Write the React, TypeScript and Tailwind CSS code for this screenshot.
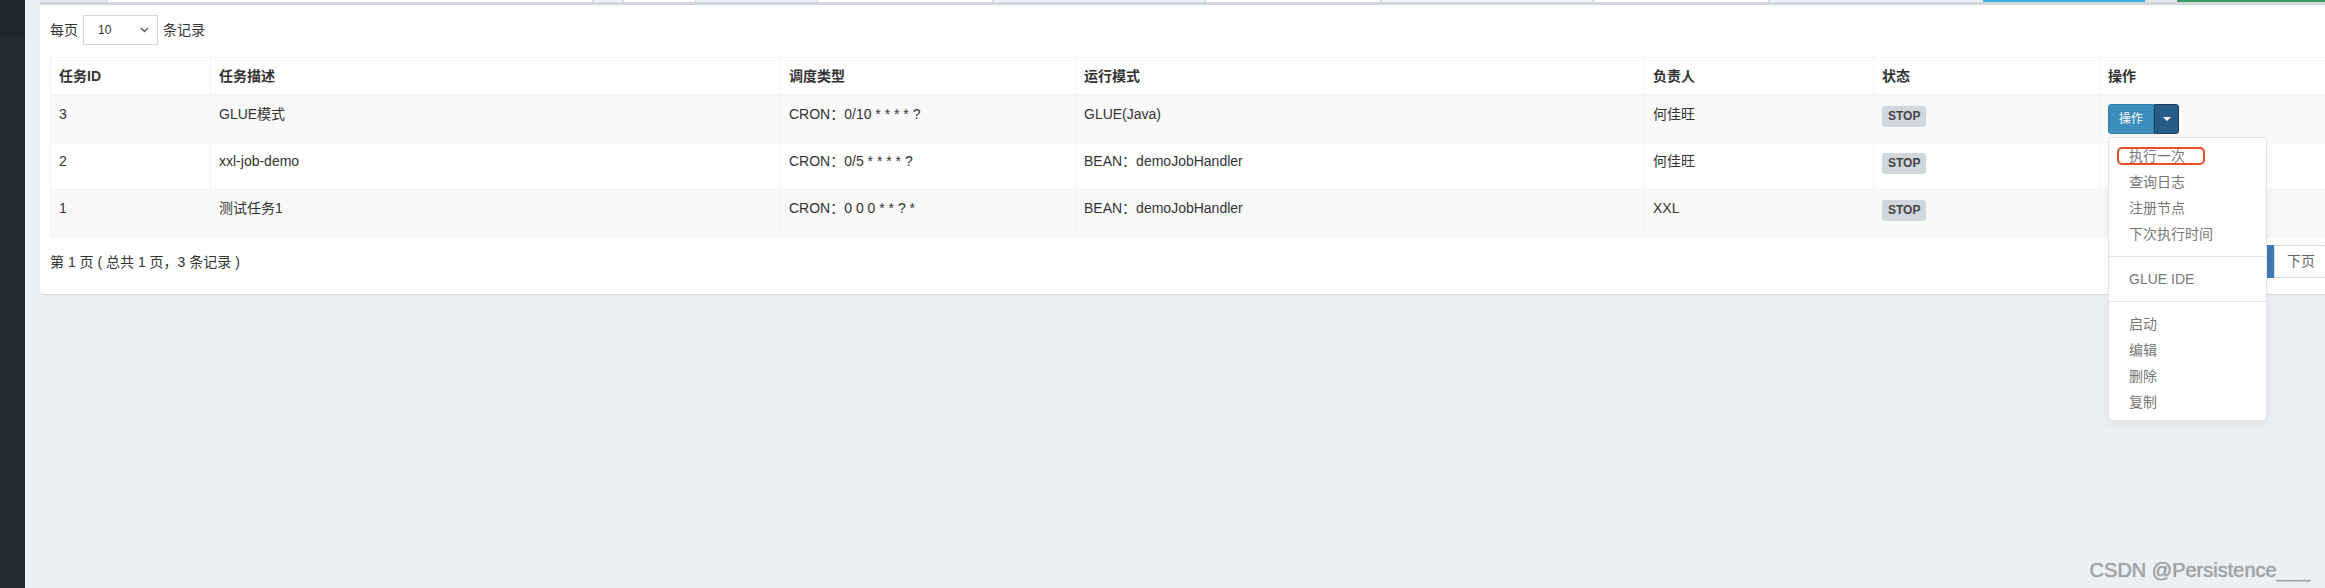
import React from 'react';

const rows = [
    { id: '3', desc: 'GLUE模式', cron: 'CRON：0/10 * * * * ?', mode: 'GLUE(Java)', owner: '何佳旺' },
    { id: '2', desc: 'xxl-job-demo', cron: 'CRON：0/5 * * * * ?', mode: 'BEAN：demoJobHandler', owner: '何佳旺' },
    { id: '1', desc: '测试任务1', cron: 'CRON：0 0 0 * * ? *', mode: 'BEAN：demoJobHandler', owner: 'XXL' },
];

// bottoms of the filter row above the box (inputs, gaps, buttons)
const strip = [
    { w: 67, c: 'bg-[#e4e8ed]' },
    { w: 486, c: 'bg-white border-x border-[#d2d6de]' },
    { w: 30, c: 'bg-[#ecf0f5]' },
    { w: 73, c: 'bg-white border-x border-[#d2d6de]' },
    { w: 121, c: 'bg-[#ecf0f5]' },
    { w: 176, c: 'bg-white border-x border-[#d2d6de]' },
    { w: 212, c: 'bg-[#ecf0f5]' },
    { w: 176, c: 'bg-white border-x border-[#d2d6de]' },
    { w: 212, c: 'bg-[#f3f5f8] border-x border-[#d2d6de]' },
    { w: 176, c: 'bg-white border-x border-[#d2d6de]' },
    { w: 214, c: 'bg-[#ecf0f5]' },
    { w: 162, c: 'bg-[#3badde]' },
    { w: 32, c: 'bg-[#e4e8ed]' },
    { w: 160, c: 'bg-[#3c9c5f]' },
];

function ActionButton() {
    return (
        <div className="relative inline-flex">
            <button className="h-[30px] px-[10px] text-[12px] leading-[18px] text-white bg-[#3c8dbc] border border-[#367fa9] rounded-l-[3px]">
                操作
            </button>
            <button className="h-[30px] w-[25px] flex items-center justify-center bg-[#285b85] border border-[#1c3f5e] rounded-r-[3px]">
                <span className="block w-0 h-0 border-t-[4px] border-t-white border-x-[4px] border-x-transparent" />
            </button>
            <DropdownMenu />
        </div>
    );
}

function DropdownMenu() {
    const item = 'block px-[20px] h-[26px] leading-[26px] text-[14px] text-[#777] whitespace-nowrap';
    return (
        <div className="absolute left-0 top-full mt-[3px] z-20 w-[159px] bg-white border border-[#e3e3e3] rounded-[4px] py-[5px] shadow-[0_4px_10px_rgba(0,0,0,0.06)]">
            <div className={item}>执行一次</div>
            <div className={item}>查询日志</div>
            <div className={item}>注册节点</div>
            <div className={item}>下次执行时间</div>
            <div className="my-[9px] h-px bg-[#e5e5e5]" />
            <div className={item}>GLUE IDE</div>
            <div className="my-[9px] h-px bg-[#e5e5e5]" />
            <div className={item}>启动</div>
            <div className={item}>编辑</div>
            <div className={item}>删除</div>
            <div className={item}>复制</div>
            {/* red annotation around the first item */}
            <div className="absolute left-[8px] top-[9px] w-[88px] h-[18px] border-2 border-[#ea4b2b] rounded-[5px]" />
        </div>
    );
}

export default function App() {
    const cell = 'border border-[#f4f4f4] px-[8px] py-[8px] align-top text-left';
    return (
        <div className="relative flex h-[588px] w-[2325px] overflow-hidden bg-[#ecf0f5] font-['Liberation_Sans','Noto_Sans_CJK_SC',sans-serif] text-[14px] leading-[20px] text-[#333]">
            <aside className="w-[25px] shrink-0 flex flex-col bg-[#232c33]">
                <div className="h-[37px] bg-[#1f262c]" />
            </aside>

            <main className="flex-1 pl-[15px]">
                <div className="flex h-[2px]">
                    {strip.map((s, i) => (
                        <div key={i} className={`h-[2px] shrink-0 ${s.c}`} style={{ width: s.w }} />
                    ))}
                </div>

                <div className="w-[2298px] bg-white border-t-[3px] border-[#d2d6de] rounded-b-[3px] shadow-[0_1px_1px_rgba(0,0,0,0.12)] px-[10px] pt-[10px] pb-[16px]">
                    <div className="flex items-center h-[30px] gap-[5px]">
                        <span>每页</span>
                        <div className="flex items-center justify-between w-[75px] h-[30px] border border-[#d2d6de] pl-[14px] pr-[8px] text-[12px]">
                            <span>10</span>
                            <svg width="9" height="6" viewBox="0 0 9 6" fill="none">
                                <path d="M1 1l3.5 3.5L8 1" stroke="#555" strokeWidth="1.4" />
                            </svg>
                        </div>
                        <span>条记录</span>
                    </div>

                    <table className="mt-[12px] w-[2278px] table-fixed border-collapse border border-[#f4f4f4]">
                        <colgroup>
                            <col className="w-[160px]" />
                            <col className="w-[570px]" />
                            <col className="w-[295px]" />
                            <col className="w-[569px]" />
                            <col className="w-[229px]" />
                            <col className="w-[226px]" />
                            <col />
                        </colgroup>
                        <thead>
                            <tr className="bg-white">
                                {['任务ID', '任务描述', '调度类型', '运行模式', '负责人', '状态', '操作'].map((h) => (
                                    <th key={h} className={`${cell} border-b-2 font-bold`}>
                                        {h}
                                    </th>
                                ))}
                            </tr>
                        </thead>
                        <tbody>
                            {rows.map((r, i) => (
                                <tr key={r.id} className={i % 2 === 0 ? 'bg-[#f9f9f9]' : 'bg-white'}>
                                    <td className={cell}>{r.id}</td>
                                    <td className={cell}>{r.desc}</td>
                                    <td className={cell}>{r.cron}</td>
                                    <td className={cell}>{r.mode}</td>
                                    <td className={cell}>{r.owner}</td>
                                    <td className={cell}>
                                        <span className="inline-block h-[21px] px-[6px] mt-[2px] leading-[21px] text-[12px] font-bold text-[#444] bg-[#d2d6de] rounded-[3px]">
                                            STOP
                                        </span>
                                    </td>
                                    <td className={cell}>
                                        {/* rows 2 and 3 keep the button's height; the open menu covers them */}
                                        {i === 0 ? <ActionButton /> : <div className="h-[30px]" />}
                                    </td>
                                </tr>
                            ))}
                        </tbody>
                    </table>

                    <div className="mt-[8px] flex items-center justify-between">
                        <span>第 1 页 ( 总共 1 页，3 条记录 )</span>
                        <ul className="flex h-[33px]">
                            <li className="px-[12px] leading-[31px] border border-[#ddd] rounded-l-[4px] text-[#999]">上页</li>
                            <li className="px-[12px] leading-[31px] border border-[#3c7ab5] bg-[#3c7ab5] text-white">1</li>
                            <li className="px-[12px] leading-[31px] border border-[#ddd] rounded-r-[4px] text-[#666] bg-white">下页</li>
                        </ul>
                    </div>
                </div>
            </main>

            <div className="absolute right-[15px] bottom-[6px] text-[20px] leading-[23px] text-[#a3a3a3] [text-shadow:0_0_1px_rgba(90,90,90,0.6)]">
                CSDN @Persistence___
            </div>
        </div>
    );
}
